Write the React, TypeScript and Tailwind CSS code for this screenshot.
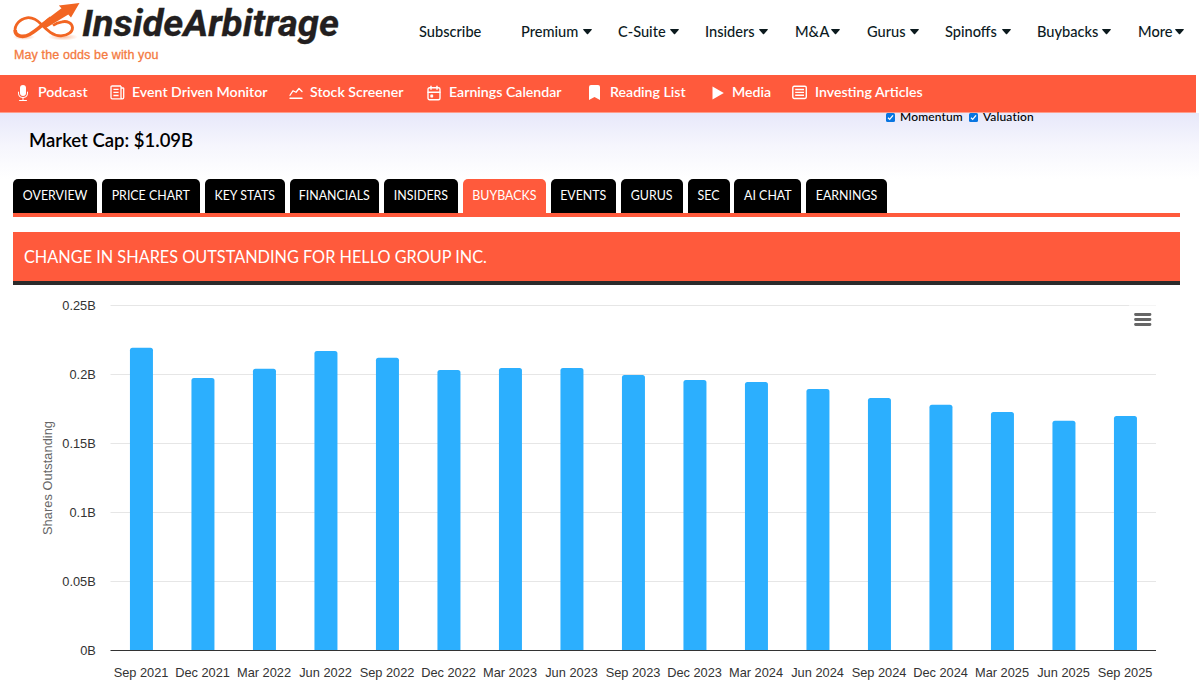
import type { ReactNode } from "react";
import { BsMicFill } from "react-icons/bs";
import { TbChartLine, TbCalendarEvent } from "react-icons/tb";

const menu = [
  { label: "Premium", width: "w-[97px]", text: "w-[58px]" },
  { label: "C-Suite", width: "w-[87px]", text: "w-[48px]" },
  { label: "Insiders", width: "w-[90px]", text: "w-[50px]" },
  { label: "M&A", width: "w-[72px]", text: "w-[32px]" },
  { label: "Gurus", width: "w-[78px]", text: "w-[39px]" },
  { label: "Spinoffs", width: "w-[92px]", text: "w-[53px]" },
  { label: "Buybacks", width: "w-[101px]", text: "w-[61px]" },
  { label: "More", width: "w-[48px]", text: "w-[33px]" },
];

const tabs = [
  { label: "OVERVIEW", width: "w-[83.5px]" },
  { label: "PRICE CHART", width: "w-[98px]" },
  { label: "KEY STATS", width: "w-[80px]" },
  { label: "FINANCIALS", width: "w-[89.5px]" },
  { label: "INSIDERS", width: "w-[74px]" },
  { label: "BUYBACKS", width: "w-[83px]" },
  { label: "EVENTS", width: "w-[65px]" },
  { label: "GURUS", width: "w-[62px]" },
  { label: "SEC", width: "w-[42px]" },
  { label: "AI CHAT", width: "w-[67px]" },
  { label: "EARNINGS", width: "w-[80.5px]" },
];

// shares outstanding, in billions
const shares = [
  { date: "Sep 2021", value: 0.2193 },
  { date: "Dec 2021", value: 0.1975 },
  { date: "Mar 2022", value: 0.2041 },
  { date: "Jun 2022", value: 0.2171 },
  { date: "Sep 2022", value: 0.2121 },
  { date: "Dec 2022", value: 0.2033 },
  { date: "Mar 2023", value: 0.2048 },
  { date: "Jun 2023", value: 0.2048 },
  { date: "Sep 2023", value: 0.1997 },
  { date: "Dec 2023", value: 0.1961 },
  { date: "Mar 2024", value: 0.1946 },
  { date: "Jun 2024", value: 0.1895 },
  { date: "Sep 2024", value: 0.183 },
  { date: "Dec 2024", value: 0.178 },
  { date: "Mar 2025", value: 0.1729 },
  { date: "Jun 2025", value: 0.1664 },
  { date: "Sep 2025", value: 0.17 },
];

const ticks = [0, 0.05, 0.1, 0.15, 0.2, 0.25];

function Logo() {
  return (
    <svg width="345" height="66" viewBox="0 0 345 66">
      <defs>
        <radialGradient id="glow">
          <stop offset="0" stopColor="#f26a2a" stopOpacity="0.45" />
          <stop offset="1" stopColor="#f26a2a" stopOpacity="0" />
        </radialGradient>
      </defs>
      <ellipse cx="24" cy="37" rx="11" ry="3" fill="url(#glow)" />
      <ellipse cx="63" cy="37" rx="15" ry="3.5" fill="url(#glow)" />
      <path
        d="M15.2 32C14 25 20 18.8 27 17.8C33 17 37 20 41.5 24.5C47 30 53 36 61 35.8C68 35.5 72.7 32 72.5 27.5C72 22.5 67 20.8 62 21.8C58 22.5 55.5 23.6 53 25.5"
        fill="none"
        stroke="#f26522"
        strokeWidth="2.8"
      />
      <path
        d="M15.2 30C15 36.5 23 38 29.5 34.5C37 30.5 43 24 51 18"
        fill="none"
        stroke="#f26522"
        strokeWidth="3.6"
      />
      <path d="M40 24.5L61.5 8.2L58.8 5.5L79.5 3L71 17.5L68.3 14.5L46 28Z" fill="#f26522" />
      <text
        x="82"
        y="36"
        textLength="257"
        lengthAdjust="spacingAndGlyphs"
        className="fill-[#231f20] stroke-[#231f20] font-[Roboto,sans-serif] text-[36px] font-bold italic"
        strokeWidth="0.3"
      >
        InsideArbitrage
      </text>
      <text
        x="14"
        y="58.5"
        textLength="144.5"
        className="fill-[#f47a41] stroke-[#f47a41] font-['Liberation_Sans',sans-serif] text-[12.5px]"
        strokeWidth="0.3"
      >
        May the odds be with you
      </text>
    </svg>
  );
}

function NavLink({ icon, label, width, gap }: { icon: ReactNode; label: string; width: string; gap: string }) {
  return (
    <a className={`flex shrink-0 items-center whitespace-nowrap ${width}`}>
      <span className={`flex shrink-0 items-center pt-0.5 ${gap}`}>{icon}</span>
      {label}
    </a>
  );
}

function NewsIcon() {
  return (
    <svg width="15" height="15" viewBox="0 0 15 15" fill="none" stroke="currentColor" strokeWidth="1.3">
      <path d="M11 1H2.2Q1 1 1 2.2V12.6Q1 13.8 2.2 13.8H12.4Q13.7 13.8 13.7 12.5V3.6Q13.7 3 13 3H11.3M11 1V12.4Q11 13.8 12.4 13.8M3.4 4.3H8.6M3.4 7.4H8.6M3.4 10.5H8.6" />
    </svg>
  );
}

function ArticleIcon() {
  return (
    <svg width="15" height="15" viewBox="0 0 15 15" fill="none" stroke="currentColor" strokeWidth="1.4">
      <rect x="0.8" y="1.3" width="13.5" height="12.2" rx="1.4" />
      <path d="M3.2 4.5H12M3.2 7.4H12M3.2 10.3H12" />
    </svg>
  );
}

function Check({ label }: { label: string }) {
  return (
    <label className="flex items-center gap-[5px]">
      <svg width="9" height="9" viewBox="0 0 9 9">
        <rect width="9" height="9" rx="1.5" fill="#0875e1" />
        <path d="M2 4.7L3.7 6.4L7 2.4" fill="none" stroke="white" strokeWidth="1.3" />
      </svg>
      {label}
    </label>
  );
}

function Chart() {
  const left = 110.5;
  const right = 1156;
  const base = 365.5;
  const scale = 1380;
  const step = (right - left) / shares.length;

  return (
    <svg width="1199" height="398" viewBox="0 0 1199 398" className="block font-['Liberation_Sans',sans-serif] text-[12.8px]">
      {ticks.map((t) => {
        const y = Math.floor(base - t * scale) + 0.5;
        return (
          <g key={t}>
            {t > 0 && <path d={`M${left} ${y}H${right}`} stroke="#e6e6e6" />}
            <text x="95.8" y={y + 4.5} textAnchor="end" fill="#333333">
              {t}B
            </text>
          </g>
        );
      })}
      <path d="M1129 20.5H1157" stroke="white" strokeOpacity="0.6" />
      <path d="M1135.5 29.5H1150M1135.5 34.5H1150M1135.5 39.5H1150" stroke="#666666" strokeWidth="2.8" strokeLinecap="round" />
      {shares.map((s, i) => {
        const x = left + step * (i + 0.5) + 0.2;
        const top = base - s.value * scale;
        return (
          <g key={s.date}>
            <path
              d={`M${x - 11.5} ${base}V${top + 2.5}q0 -2.5 2.5 -2.5h18q2.5 0 2.5 2.5V${base}Z`}
              fill="#2caffe"
            />
            <text x={x - 0.4} y="392" textAnchor="middle" fill="#333333">
              {s.date}
            </text>
          </g>
        );
      })}
      <path d={`M${left} 365.5H${right}`} stroke="#333333" />
      <text
        transform="translate(51.5 193) rotate(-90)"
        textAnchor="middle"
        textLength="114"
        fill="#666666"
      >
        Shares Outstanding
      </text>
    </svg>
  );
}

export default function App() {
  return (
    <div className="h-[683px] w-[1199px] overflow-hidden bg-white font-[Lato,sans-serif] text-black">
      <header className="flex h-[75px] items-start">
        <Logo />
        <nav className="ml-[74px] flex h-[64px] items-center text-[14.6px] font-medium text-[#0c1a1e]">
          <a className="w-[102px]">Subscribe</a>
          {menu.map((m) => (
            <a key={m.label} className={`flex shrink-0 items-center ${m.width}`}>
              <span className={`shrink-0 whitespace-nowrap ${m.text}`}>{m.label}</span>
              <svg className="ml-1 shrink-0" width="9" height="6" viewBox="0 0 9 6">
                <path d="M0.7 0H8.3Q9.4 0 8.6 0.9L5.1 5Q4.5 5.7 3.9 5L0.4 0.9Q-0.4 0 0.7 0Z" fill="currentColor" />
              </svg>
            </a>
          ))}
        </nav>
      </header>

      <nav className="flex h-[38px] w-[1196px] items-center border-b border-[#ff9c8a] bg-[#ff5a3c] pb-[3px] pl-[15px] text-[14.15px] font-semibold text-white">
        <NavLink icon={<BsMicFill size={16} />} label="Podcast" width="w-[95px]" gap="w-[23px]" />
        <NavLink icon={<NewsIcon />} label="Event Driven Monitor" width="w-[177px]" gap="w-[22px]" />
        <NavLink icon={<TbChartLine size={18} strokeWidth={1.8} />} label="Stock Screener" width="w-[138px]" gap="w-[23px]" />
        <NavLink icon={<TbCalendarEvent size={18} strokeWidth={1.8} />} label="Earnings Calendar" width="w-[164px]" gap="w-[24px]" />
        <NavLink
          icon={
            <svg width="11" height="15" viewBox="0 0 11 15">
              <path d="M2 0H9Q11 0 11 2V15L5.5 12L0 15V2Q0 0 2 0Z" fill="currentColor" />
            </svg>
          }
          label="Reading List"
          width="w-[123px]"
          gap="w-[21px]"
        />
        <NavLink
          icon={
            <svg width="12" height="14" viewBox="0 0 12 14">
              <path d="M0.5 0.5L11.8 7L0.5 13.5Z" fill="currentColor" />
            </svg>
          }
          label="Media"
          width="w-[80px]"
          gap="w-[20px]"
        />
        <NavLink icon={<ArticleIcon />} label="Investing Articles" width="w-[134px]" gap="w-[23px]" />
      </nav>

      <section className="flex h-[66px] items-start bg-linear-to-b from-[#e7e8fa] via-[#f6f6fd] to-white">
        <h2 className="mt-[15px] ml-[29px] w-[857px] text-[18.5px] leading-6 font-semibold">Market Cap: $1.09B</h2>
        <div className="-mt-0.5 flex h-[12px] items-center gap-[6px] text-[12px] leading-none font-medium tracking-[0.15px]">
          <Check label="Momentum" />
          <Check label="Valuation" />
        </div>
      </section>

      <div className="ml-[13.4px] flex h-[38px] w-[1167px] gap-[4.9px] border-b-4 border-[#ff5a3c] text-[12.4px] text-white">
        {tabs.map((t) => (
          <div
            key={t.label}
            className={`flex shrink-0 items-center justify-center rounded-t-[5px] whitespace-nowrap ${t.width} ${
              t.label === "BUYBACKS" ? "bg-[#ff5a3c]" : "bg-black"
            }`}
          >
            {t.label}
          </div>
        ))}
      </div>

      <h3 className="mt-[15px] ml-[13.4px] flex h-[53px] w-[1167px] items-center border-b-4 border-[#2b2b2b] bg-[#ff5a3c] pt-px pl-[10.6px] text-[16.3px] text-white">
        CHANGE IN SHARES OUTSTANDING FOR HELLO GROUP INC.
      </h3>
      <Chart />
    </div>
  );
}
